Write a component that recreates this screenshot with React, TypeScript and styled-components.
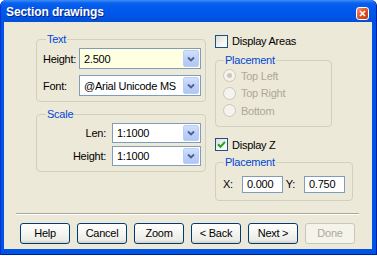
import React from "react";
import styled, { createGlobalStyle } from "styled-components";

const Global = createGlobalStyle`
  html, body { margin: 0; padding: 0; background: #ffffff; }
  body { font-family: "Liberation Sans", Arial, sans-serif; font-size: 11px; letter-spacing: -0.25px; }
`;

const Window = styled.div`
  width: 377px;
  height: 255px;
  box-sizing: border-box;
  display: flex;
  flex-direction: column;
  background: #0054e3;
  border-left: 1px solid #0831d9;
  border-right: 1px solid #001ea0;
  border-bottom: 1px solid #001ea0;
  border-radius: 6px 6px 0 0;
  overflow: hidden;
`;

const TitleBar = styled.div`
  height: 22px;
  flex: none;
  display: flex;
  align-items: center;
  justify-content: space-between;
  padding: 0 7px 0 5px;
  background: linear-gradient(to bottom, #3d8ef8 0%, #0a61ec 14%, #0058ee 40%, #0055e5 75%, #0050d8 100%);
`;

const Title = styled.span`
  color: #ffffff;
  font-family: "Liberation Sans", Arial, sans-serif;
  font-weight: bold;
  font-size: 12px;
  letter-spacing: -0.1px;
  text-shadow: 1px 1px 0 #0a1f80;
  padding-top: 2px;
`;

const CloseButton = styled.div`
  width: 13px;
  height: 13px;
  box-sizing: border-box;
  border: 1px solid #ffffff;
  border-radius: 3px;
  background: linear-gradient(135deg, #f29b7e 0%, #e1572f 45%, #c7380d 100%);
  display: flex;
  align-items: center;
  justify-content: center;
  margin-top: 4px;
`;

const Client = styled.div`
  flex: 1;
  margin: 0 4px 5px 3px;
  background: #ece9d8;
  display: flex;
  flex-direction: column;
  padding: 11px 0 0 0;
  box-sizing: border-box;
`;

const MainRow = styled.div`
  display: flex;
  gap: 9px;
  padding-left: 32px;
`;

const LeftColumn = styled.div`
  width: 170px;
  display: flex;
  flex-direction: column;
  gap: 6px;
`;

const RightColumn = styled.div`
  width: 138px;
  display: flex;
  flex-direction: column;
  align-items: flex-start;
`;

const Group = styled.fieldset<{ $w?: number; $pad?: string }>`
  margin: 0;
  border: 1px solid #d0d0bf;
  border-radius: 4px;
  padding: ${(p) => p.$pad ?? "2px 5px 5px 6px"};
  box-sizing: border-box;
  width: ${(p) => (p.$w ? `${p.$w}px` : "100%")};
  min-width: 0;
`;

const Legend = styled.legend<{ $ml?: number }>`
  color: #0046d5;
  padding: 0 1px;
  margin-left: ${(p) => p.$ml ?? 3}px;
  line-height: 13px;
  font-size: 11px;
`;

const FieldRow = styled.div<{ $mt?: number }>`
  display: flex;
  align-items: center;
  margin-top: ${(p) => p.$mt ?? 0}px;
`;

const Label = styled.span<{ $w: number; $right?: boolean }>`
  width: ${(p) => p.$w}px;
  flex: none;
  color: #000000;
  text-align: ${(p) => (p.$right ? "right" : "left")};
  box-sizing: border-box;
`;

const Combo = styled.div<{ $bg?: string; $h?: number }>`
  flex: 1;
  height: ${(p) => p.$h ?? 21}px;
  box-sizing: border-box;
  border: 1px solid #7f9db9;
  background: ${(p) => p.$bg ?? "#ffffff"};
  display: flex;
  align-items: center;
  padding: 1px;
  color: #000000;
`;

const ComboText = styled.span`
  flex: 1;
  padding-left: 3px;
  white-space: nowrap;
  overflow: hidden;
`;

const ComboButton = styled.div`
  width: 16px;
  height: 100%;
  box-sizing: border-box;
  border: 1px solid #bacdf5;
  border-radius: 2px;
  background: linear-gradient(to bottom, #d3e0fc 0%, #c1d3fb 40%, #b0c6f5 100%);
  display: flex;
  align-items: center;
  justify-content: center;
`;

const CheckRow = styled.div<{ $mt?: number }>`
  display: flex;
  align-items: center;
  height: 16px;
  gap: 4px;
  margin-top: ${(p) => p.$mt ?? 0}px;
  color: #000000;
`;

const CheckBox = styled.div`
  width: 13px;
  height: 13px;
  box-sizing: border-box;
  border: 1px solid #1c5180;
  background: linear-gradient(135deg, #dcdcd7 0%, #f5f5f3 60%, #ffffff 100%);
  display: flex;
  align-items: center;
  justify-content: center;
`;

const Spacer = styled.div<{ $h: number }>`
  height: ${(p) => p.$h}px;
  flex: none;
`;

const RadioRow = styled.div`
  display: flex;
  align-items: center;
  height: 17.5px;
  gap: 5px;
  color: #aca899;
`;

const RadioCircle = styled.div<{ $on?: boolean }>`
  width: 13px;
  height: 13px;
  box-sizing: border-box;
  border: 1px solid #cac8bb;
  border-radius: 50%;
  background: #f4f3ee;
  display: flex;
  align-items: center;
  justify-content: center;
  &::after {
    content: "";
    width: 5px;
    height: 5px;
    border-radius: 50%;
    background: ${(p) => (p.$on ? "#cac8bb" : "transparent")};
  }
`;

const EditBox = styled.div`
  width: 41px;
  height: 17px;
  box-sizing: border-box;
  border: 1px solid #7f9db9;
  background: #ffffff;
  padding-left: 4px;
  display: flex;
  align-items: center;
  color: #000000;
`;

const Separator = styled.div`
  margin: 12px 13px 0 12px;
  height: 2px;
  border-top: 1px solid #aca899;
  border-bottom: 1px solid #ffffff;
  box-sizing: border-box;
`;

const ButtonRow = styled.div`
  display: flex;
  gap: 7px;
  padding-left: 16px;
  margin-top: 8px;
`;

const Button = styled.div<{ $disabled?: boolean }>`
  width: 50px;
  height: 21px;
  box-sizing: border-box;
  border: 1px solid ${(p) => (p.$disabled ? "#c9c7ba" : "#003c74")};
  border-radius: 3px;
  background: ${(p) =>
    p.$disabled
      ? "#f5f4ea"
      : "linear-gradient(to bottom, #ffffff 0%, #f4f4f0 50%, #ecebe6 85%, #d6d0c5 100%)"};
  color: ${(p) => (p.$disabled ? "#aca899" : "#000000")};
  display: flex;
  align-items: center;
  justify-content: center;
`;

const Chevron = () => (
  <svg width="8" height="6" viewBox="0 0 8 6">
    <path d="M1 1.5 L4 4.5 L7 1.5" fill="none" stroke="#4d6185" strokeWidth="1.8" />
  </svg>
);

const ComboBox = ({ value, bg, h }: { value: string; bg?: string; h?: number }) => (
  <Combo $bg={bg} $h={h}>
    <ComboText>{value}</ComboText>
    <ComboButton>
      <Chevron />
    </ComboButton>
  </Combo>
);

export default function App() {
  return (
    <>
      <Global />
      <Window>
        <TitleBar>
          <Title>Section drawings</Title>
          <CloseButton>
            <svg width="7" height="7" viewBox="0 0 7 7">
              <path d="M1 1 L6 6 M6 1 L1 6" stroke="#ffffff" strokeWidth="1.6" />
            </svg>
          </CloseButton>
        </TitleBar>
        <Client>
          <MainRow>
            <LeftColumn>
              <Group $pad="2px 4px 5px 6px">
                <Legend>Text</Legend>
                <FieldRow>
                  <Label $w={36}>Height:</Label>
                  <ComboBox value="2.500" bg="#ffffe1" />
                </FieldRow>
                <FieldRow $mt={6}>
                  <Label $w={36}>Font:</Label>
                  <ComboBox value="@Arial Unicode MS" />
                </FieldRow>
              </Group>
              <Group $pad="2px 4px 5px 6px">
                <Legend>Scale</Legend>
                <FieldRow>
                  <Label $w={63} $right>
                    Len:
                  </Label>
                  <Label $w={6} />
                  <ComboBox value="1:1000" h={20} />
                </FieldRow>
                <FieldRow $mt={3}>
                  <Label $w={63} $right>
                    Height:
                  </Label>
                  <Label $w={6} />
                  <ComboBox value="1:1000" h={20} />
                </FieldRow>
              </Group>
            </LeftColumn>
            <RightColumn>
              <CheckRow>
                <CheckBox />
                <span>Display Areas</span>
              </CheckRow>
              <Spacer $h={5} />
              <Group $w={117} $pad="0 6px 6px 7px">
                <Legend $ml={1}>Placement</Legend>
                <RadioRow>
                  <RadioCircle $on />
                  <span>Top Left</span>
                </RadioRow>
                <RadioRow>
                  <RadioCircle />
                  <span>Top Right</span>
                </RadioRow>
                <RadioRow>
                  <RadioCircle />
                  <span>Bottom</span>
                </RadioRow>
              </Group>
              <CheckRow $mt={10}>
                <CheckBox>
                  <svg width="9" height="9" viewBox="0 0 9 9">
                    <path d="M1 4.2 L3.5 6.8 L8 1.8" fill="none" stroke="#21a121" strokeWidth="2" />
                  </svg>
                </CheckBox>
                <span>Display Z</span>
              </CheckRow>
              <Spacer $h={3} />
              <Group $w={138} $pad="7px 6px 7px 7px">
                <Legend $ml={1}>Placement</Legend>
                <FieldRow>
                  <Label $w={19}>X:</Label>
                  <EditBox>0.000</EditBox>
                  <Label $w={21}>&nbsp;Y:</Label>
                  <EditBox>0.750</EditBox>
                </FieldRow>
              </Group>
            </RightColumn>
          </MainRow>
          <Separator />
          <ButtonRow>
            <Button>Help</Button>
            <Button>Cancel</Button>
            <Button>Zoom</Button>
            <Button>&lt; Back</Button>
            <Button>Next &gt;</Button>
            <Button $disabled>Done</Button>
          </ButtonRow>
        </Client>
      </Window>
    </>
  );
}
